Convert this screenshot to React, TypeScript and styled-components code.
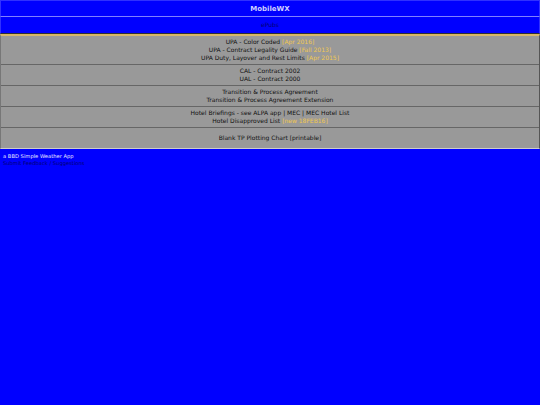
import React from 'react'
import styled, { createGlobalStyle } from 'styled-components'

const GlobalStyle = createGlobalStyle`
  html, body {
    margin: 0;
    padding: 0;
    background: #0000ff;
    font-family: 'DejaVu Sans', Verdana, sans-serif;
  }
`

const Page = styled.div`
  width: 540px;
  min-height: 405px;
  background: #0000ff;
`

const TitleBar = styled.div`
  height: 15px;
  line-height: 16px;
  text-align: center;
  color: #d0d0ff;
  font-size: 7px;
  font-weight: bold;
  border: 1px solid #3030ff;
  border-bottom: 1px solid #8080ff;
`

const SubBar = styled.div`
  height: 16px;
  line-height: 16px;
  text-align: center;
  color: #000070;
  font-size: 6px;
  border-left: 1px solid #3030ff;
  border-right: 1px solid #3030ff;
  border-bottom: 1px solid #303030;
`

const Panel = styled.div`
  background: #999999;
  border-top: 2px solid #d8b868;
  border-left: 1px solid #777777;
  border-right: 1px solid #555555;
  border-bottom: 1px solid #cccccc;
`

const Row = styled.div<{ $pad: number }>`
  padding: ${p => p.$pad}px 0;
  text-align: center;
  font-size: 6px;
  line-height: 8px;
  color: #111111;
  & + & {
    border-top: 1px solid #666666;
  }
`

const Note = styled.span`
  color: #f0c850;
`

const Footer = styled.div`
  padding: 4px 3px;
  font-size: 5.2px;
  line-height: 7px;
  color: #e8e8ff;
`

const FooterLink = styled.div`
  color: #000070;
`

export default function App() {
  return (
    <Page>
      <GlobalStyle />
      <TitleBar>MobileWX</TitleBar>
      <SubBar>ePubs</SubBar>
      <Panel>
        <Row $pad={2}>
          <div>UPA - Color Coded <Note>[Apr 2016]</Note></div>
          <div>UPA - Contract Legality Guide <Note>[Fall 2013]</Note></div>
          <div>UPA Duty, Layover and Rest Limits <Note>[Apr 2015]</Note></div>
        </Row>
        <Row $pad={2}>
          <div>CAL - Contract 2002</div>
          <div>UAL - Contract 2000</div>
        </Row>
        <Row $pad={2}>
          <div>Transition &amp; Process Agreement</div>
          <div>Transition &amp; Process Agreement Extension</div>
        </Row>
        <Row $pad={2}>
          <div>Hotel Briefings - see ALPA app | MEC | MEC Hotel List</div>
          <div>Hotel Disapproved List <Note>[new 18FEB16]</Note></div>
        </Row>
        <Row $pad={6}>
          <div>Blank TP Plotting Chart [printable]</div>
        </Row>
      </Panel>
      <Footer>
        <div>a BBD Simple Weather App</div>
        <FooterLink>Submit Feedback / Suggestions</FooterLink>
      </Footer>
    </Page>
  )
}
